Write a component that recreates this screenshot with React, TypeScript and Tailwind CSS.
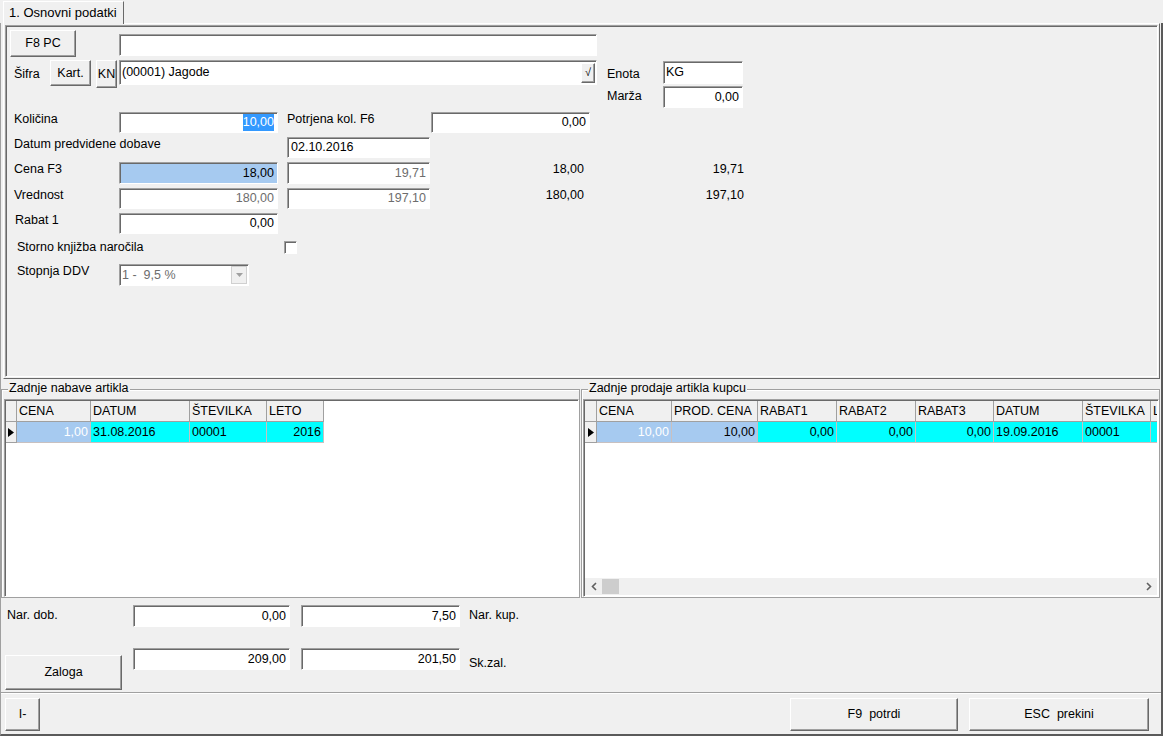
import type { ReactNode } from 'react'

const sunken = 'border border-t-[#a0a0a0] border-l-[#a0a0a0] border-r-white border-b-white shadow-[inset_1px_1px_0_#696969]'
const raised = 'border border-t-white border-l-white border-r-[#696969] border-b-[#696969] shadow-[inset_-1px_-1px_0_#a0a0a0] bg-[#f0f0f0]'

function Label({ className = '', children }: { className?: string; children: ReactNode }) {
  return <div className={`shrink-0 leading-[15px] whitespace-nowrap ${className}`}>{children}</div>
}

function Edit({
  className = '',
  children,
  left = false,
  gray = false,
  bg = 'bg-white',
}: {
  className?: string
  children?: ReactNode
  left?: boolean
  gray?: boolean
  bg?: string
}) {
  return (
    <div
      className={`${sunken} ${bg} flex shrink-0 items-center overflow-hidden whitespace-nowrap ${
        left ? 'justify-start pl-[3px]' : 'justify-end pr-[3px]'
      } ${gray ? 'text-[#6d6d6d]' : 'text-black'} ${className}`}
    >
      {children}
    </div>
  )
}

function Btn({ className = '', children }: { className?: string; children: ReactNode }) {
  return (
    <button type="button" className={`${raised} flex shrink-0 items-center justify-center whitespace-pre leading-none ${className}`}>
      {children}
    </button>
  )
}

type Cell = { w: string; head: string; value: string; right?: boolean; tone: 'blue' | 'blueWhite' | 'cyan' }

const LEFT_COLS: Cell[] = [
  { w: 'w-[74px]', head: 'CENA', value: '1,00', right: true, tone: 'blueWhite' },
  { w: 'w-[99px]', head: 'DATUM', value: '31.08.2016', tone: 'cyan' },
  { w: 'w-[77px]', head: 'ŠTEVILKA', value: '00001', tone: 'cyan' },
  { w: 'w-[57px]', head: 'LETO', value: '2016', right: true, tone: 'cyan' },
]

const RIGHT_COLS: Cell[] = [
  { w: 'w-[75px]', head: 'CENA', value: '10,00', right: true, tone: 'blueWhite' },
  { w: 'w-[86px]', head: 'PROD. CENA', value: '10,00', right: true, tone: 'blue' },
  { w: 'w-[79px]', head: 'RABAT1', value: '0,00', right: true, tone: 'cyan' },
  { w: 'w-[79px]', head: 'RABAT2', value: '0,00', right: true, tone: 'cyan' },
  { w: 'w-[78px]', head: 'RABAT3', value: '0,00', right: true, tone: 'cyan' },
  { w: 'w-[89px]', head: 'DATUM', value: '19.09.2016', tone: 'cyan' },
  { w: 'w-[68px]', head: 'ŠTEVILKA', value: '00001', tone: 'cyan' },
  { w: 'w-[40px]', head: 'LETO', value: '2016', right: true, tone: 'cyan' },
]

const TONES = {
  blue: 'bg-[#a6caf0] text-black',
  blueWhite: 'bg-[#a6caf0] text-white',
  cyan: 'bg-[#00ffff] text-black',
}

function Grid({ cols, indW, scroll = false }: { cols: Cell[]; indW: string; scroll?: boolean }) {
  return (
    <div className="flex h-full flex-col overflow-hidden">
      <div className="flex h-[21px] shrink-0">
        <div className={`${indW} h-full shrink-0 border-r border-b border-[#a0a0a0] bg-[#f0f0f0]`} />
        {cols.map((c) => (
          <div
            key={c.head}
            className={`${c.w} flex h-full shrink-0 items-center overflow-hidden whitespace-nowrap border-r border-b border-[#a0a0a0] bg-[#f0f0f0] pl-[2px]`}
          >
            {c.head}
          </div>
        ))}
      </div>
      <div className="flex h-[21px] shrink-0">
        <div className={`${indW} flex h-full shrink-0 items-center justify-center border-r border-b border-[#a0a0a0] bg-[#f0f0f0]`}>
          <svg width="6" height="9" viewBox="0 0 6 9">
            <path d="M0 0L6 4.5L0 9z" fill="#000" />
          </svg>
        </div>
        {cols.map((c) => (
          <div
            key={c.head}
            className={`${c.w} ${TONES[c.tone]} flex h-full shrink-0 items-center overflow-hidden whitespace-nowrap border-r border-b border-[#c8c0c0] ${
              c.right ? 'justify-end pr-[2px]' : 'pl-[2px]'
            }`}
          >
            {c.value}
          </div>
        ))}
      </div>
      {scroll && (
        <div className="mt-auto flex h-[17px] shrink-0 items-center bg-[#f0f0f0]">
          <div className="flex h-full w-[17px] items-center justify-center">
            <svg width="6" height="9" viewBox="0 0 6 9">
              <path d="M5 1L1.5 4.5L5 8" fill="none" stroke="#606060" strokeWidth="1.6" />
            </svg>
          </div>
          <div className="h-[15px] w-[17px] bg-[#cdcdcd]" />
          <div className="flex-1" />
          <div className="flex h-full w-[17px] items-center justify-center">
            <svg width="6" height="9" viewBox="0 0 6 9">
              <path d="M1 1L4.5 4.5L1 8" fill="none" stroke="#606060" strokeWidth="1.6" />
            </svg>
          </div>
        </div>
      )}
    </div>
  )
}

function GroupBox({ title, className = '', children }: { title: string; className?: string; children: ReactNode }) {
  return (
    <div className={`relative mt-[10px] h-[209px] shrink-0 border border-[#a0a0a0] shadow-[inset_1px_1px_0_white] ${className}`}>
      <span className="absolute left-[6px] top-[-9px] bg-[#f0f0f0] px-[1px] leading-[15px] whitespace-nowrap">{title}</span>
      {children}
    </div>
  )
}

export default function App() {
  return (
    <div className="flex h-[736px] w-[1163px] flex-col overflow-hidden bg-[#f0f0f0] font-['Liberation_Sans',Arial,sans-serif] text-[12.5px] text-black">
      {/* tab strip */}
      <div className="flex h-[23px] shrink-0 items-end pl-[3px]">
        <div className="relative z-10 -mb-px h-[23px] border-t border-l border-t-white border-l-white border-r border-r-[#696969] bg-[#f0f0f0] pl-[5px] pr-[6px] text-[13px] leading-[21px]">
          1. Osnovni podatki
        </div>
      </div>

      <div className="flex flex-1 flex-col border-l border-l-[#a0a0a0] border-r-2 border-r-[#5a5a5a] border-b-2 border-b-[#5a5a5a]">
        {/* tab page */}
        <div className="ml-[2px] h-[356px] w-[1157px] shrink-0 border-t border-l border-t-white border-l-white border-r border-b border-r-[#696969] border-b-[#696969] p-[1px]">
          <div className={`${sunken} h-full w-full bg-[#f0f0f0]`}>
            <div className="flex flex-col">
              <div className="mt-[4px] flex items-start">
                <Btn className="ml-[4px] h-[27px] w-[66px]">F8 PC</Btn>
                <Edit className="ml-[43px] mt-[4px] h-[22px] w-[478px]" />
              </div>

              <div className="mt-[3px] flex items-start">
                <Label className="w-[44px] pl-[8px] pt-[7px]">Šifra</Label>
                <Btn className="h-[26px] w-[41px]">Kart.</Btn>
                <Btn className="ml-[5px] h-[28px] w-[21px] overflow-hidden">KN</Btn>
                <div className={`${sunken} ml-[2px] flex h-[25px] w-[478px] shrink-0 items-center justify-between bg-white`}>
                  <span className="pl-[2px] whitespace-nowrap">(00001) Jagode</span>
                  <Btn className="mr-[1px] h-[20px] w-[14px] text-[11px]">√</Btn>
                </div>
                <div className="ml-[10px] flex flex-col">
                  <div className="flex items-start">
                    <Label className="w-[56px] pt-[7px]">Enota</Label>
                    <Edit left className="mt-[1px] h-[23px] w-[80px] !pl-[2px]">KG</Edit>
                  </div>
                  <div className="mt-[2px] flex items-start">
                    <Label className="w-[56px] pt-[3px]">Marža</Label>
                    <Edit className="h-[22px] w-[80px]">0,00</Edit>
                  </div>
                </div>
              </div>

              <div className="mt-[4px] flex items-start">
                <Label className="w-[113px] pl-[8px]">Količina</Label>
                <Edit className="h-[21px] w-[159px]">
                  <span className="bg-[#3399ff] leading-[17px] text-white">10,00</span>
                </Edit>
                <Label className="ml-[9px] w-[144px]">Potrjena kol. F6</Label>
                <Edit className="h-[21px] w-[159px]">0,00</Edit>
              </div>

              <div className="mt-[4px] flex items-start">
                <Label className="w-[281px] pl-[8px]">Datum predvidene dobave</Label>
                <Edit left className="h-[21px] w-[143px]">02.10.2016</Edit>
              </div>

              <div className="mt-[4px] flex items-start">
                <Label className="w-[113px] pl-[8px]">Cena F3</Label>
                <Edit bg="bg-[#a6caf0]" className="h-[22px] w-[159px]">18,00</Edit>
                <Edit gray className="ml-[9px] h-[22px] w-[143px]">19,71</Edit>
                <Label className="w-[154px] text-right">18,00</Label>
                <Label className="w-[160px] text-right">19,71</Label>
              </div>

              <div className="mt-[4px] flex items-start">
                <Label className="w-[113px] pl-[8px]">Vrednost</Label>
                <Edit gray className="h-[21px] w-[159px]">180,00</Edit>
                <Edit gray className="ml-[9px] h-[21px] w-[143px]">197,10</Edit>
                <Label className="w-[154px] text-right">180,00</Label>
                <Label className="w-[160px] text-right">197,10</Label>
              </div>

              <div className="mt-[4px] flex items-start">
                <Label className="w-[113px] pl-[9px]">Rabat 1</Label>
                <Edit className="h-[21px] w-[159px]">0,00</Edit>
              </div>

              <div className="mt-[6px] flex items-start">
                <Label className="w-[278px] pl-[11px]">Storno knjižba naročila</Label>
                <div className={`${sunken} mt-[1px] h-[13px] w-[13px] shrink-0 bg-white`} />
              </div>

              <div className="mt-[9px] flex items-start">
                <Label className="w-[113px] pl-[11px]">Stopnja DDV</Label>
                <div className={`${sunken} flex h-[22px] w-[130px] shrink-0 items-center justify-between bg-white`}>
                  <span className="pl-[2px] whitespace-pre text-[#6d6d6d]">1 -  9,5 %</span>
                  <div className="mr-[1px] flex h-[18px] w-[16px] items-center justify-center border border-[#d0d0d0] bg-[#f0f0f0]">
                    <svg width="7" height="4" viewBox="0 0 7 4">
                      <path d="M0 0H7L3.5 4z" fill="#a0a0a0" />
                    </svg>
                  </div>
                </div>
              </div>
            </div>
          </div>
        </div>

        {/* group boxes */}
        <div className="flex h-[219px] shrink-0 items-start">
          <GroupBox title="Zadnje nabave artikla" className="w-[579px]">
            <div className={`${sunken} ml-[2px] mt-[9px] h-[198px] w-[575px] bg-white p-[1px]`}>
              <Grid cols={LEFT_COLS.slice(0, 4)} indW="w-[11px]" />
            </div>
          </GroupBox>
          <GroupBox title="Zadnje prodaje artikla kupcu" className="ml-[1px] w-[579px]">
            <div className={`${sunken} ml-[1px] mt-[9px] h-[198px] w-[576px] bg-white p-[1px]`}>
              <Grid cols={RIGHT_COLS} indW="w-[12px]" scroll />
            </div>
          </GroupBox>
        </div>

        {/* totals */}
        <div className="flex h-[94px] shrink-0 items-start">
          <div className="flex w-[132px] flex-col">
            <Label className="mt-[10px] pl-[6px]">Nar. dob.</Label>
            <Btn className="ml-[4px] mt-[32px] h-[35px] w-[117px]">Zaloga</Btn>
          </div>
          <div className="flex flex-col">
            <Edit className="mt-[7px] h-[22px] w-[157px]">0,00</Edit>
            <Edit className="mt-[21px] h-[22px] w-[157px]">209,00</Edit>
          </div>
          <div className="ml-[11px] flex flex-col">
            <Edit className="mt-[7px] h-[22px] w-[159px]">7,50</Edit>
            <Edit className="mt-[21px] h-[22px] w-[159px]">201,50</Edit>
          </div>
          <div className="ml-[9px] flex flex-col">
            <Label className="mt-[10px]">Nar. kup.</Label>
            <Label className="mt-[33px]">Sk.zal.</Label>
          </div>
        </div>

        <div className="h-[2px] shrink-0 border-t border-b border-t-[#a0a0a0] border-b-white" />

        {/* buttons */}
        <div className="flex h-[40px] shrink-0 items-start pt-[4px]">
          <Btn className="ml-[4px] h-[33px] w-[35px]">I-</Btn>
          <Btn className="ml-[750px] h-[33px] w-[168px]">F9  potrdi</Btn>
          <Btn className="ml-[11px] h-[33px] w-[180px]">ESC  prekini</Btn>
        </div>
      </div>
    </div>
  )
}
